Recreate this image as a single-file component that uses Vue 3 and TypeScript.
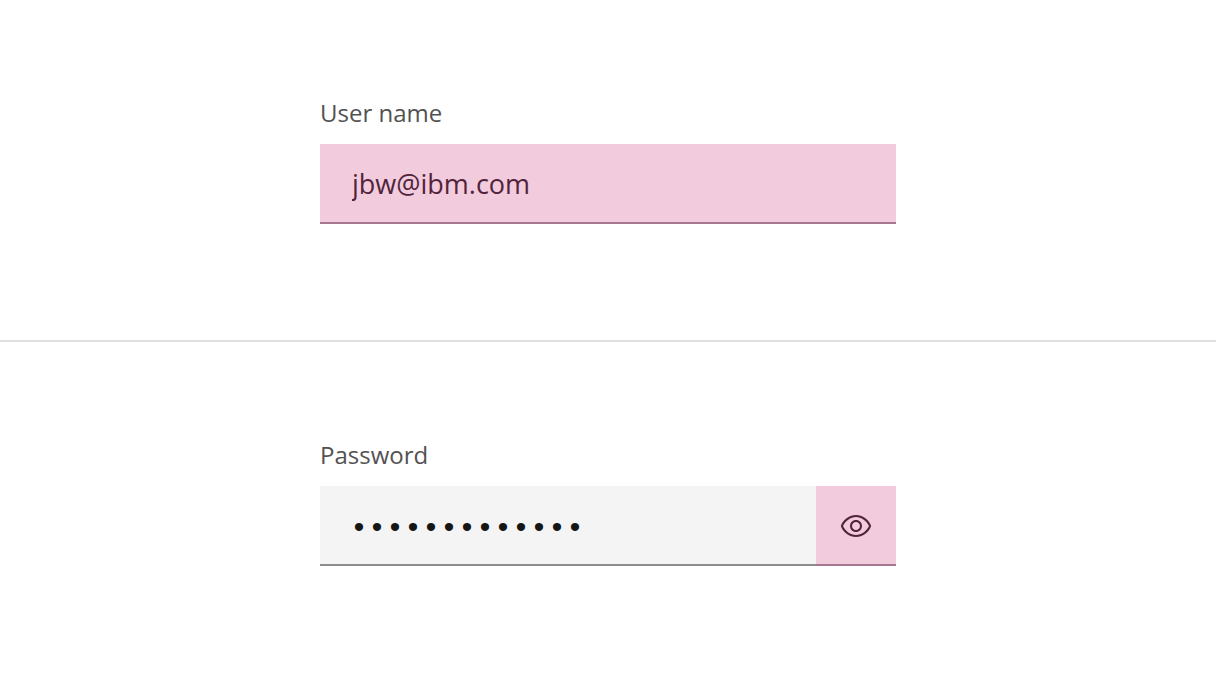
<script setup lang="ts">
import { ref } from 'vue'

const userName = ref('jbw@ibm.com')
const password = ref('carbon-design')
const revealed = ref(false)
</script>

<template>
  <main class="page">
    <section class="panel">
      <div class="field">
        <label class="label" for="user-name">User name</label>
        <div class="control">
          <input id="user-name" v-model="userName" class="input highlighted" type="text" autocomplete="off" />
        </div>
      </div>
    </section>
    <section class="panel divided">
      <div class="field">
        <label class="label" for="password">Password</label>
        <div class="control">
          <input
            id="password"
            v-model="password"
            class="input"
            :class="{ masked: !revealed }"
            :type="revealed ? 'text' : 'password'"
            autocomplete="off"
          />
          <button
            class="reveal"
            type="button"
            :aria-label="revealed ? 'Hide password' : 'Show password'"
            :aria-pressed="revealed"
            @click="revealed = !revealed"
          >
            <svg class="eye" viewBox="0 0 16 16" aria-hidden="true">
              <path d="M15.5 7.8C14.3 4.7 11.3 2.6 8 2.5C4.7 2.6 1.7 4.7.5 7.8c-.1.1-.1.2 0 .4C1.7 11.3 4.7 13.4 8 13.5c3.3-.1 6.3-2.2 7.5-5.3C15.6 8.1 15.6 7.9 15.5 7.8ZM8 12.5c-2.7 0-5.4-2-6.5-4.5c1.1-2.5 3.8-4.5 6.5-4.5s5.4 2 6.5 4.5C13.4 10.5 10.6 12.5 8 12.5Z" />
              <path d="M8 5C6.3 5 5 6.3 5 8s1.3 3 3 3s3-1.3 3-3S9.7 5 8 5ZM8 10c-1.1 0-2-.9-2-2s.9-2 2-2s2 .9 2 2S9.1 10 8 10Z" />
            </svg>
          </button>
        </div>
      </div>
    </section>
  </main>
</template>

<style>
body {
  margin: 0;
  background: #fff;
}
</style>

<style scoped>
.page {
  display: grid;
  grid-template-rows: 1fr 1fr;
  min-height: 100vh;
  font-family: "Open Sans", "Noto Sans", sans-serif;
}

.panel {
  display: flex;
  justify-content: center;
  align-items: flex-start;
  box-sizing: border-box;
  padding: 96px 32px;
}

.divided {
  border-top: 2px solid #e0e0e0;
  margin-top: -2px;
}

.field {
  display: flex;
  flex-direction: column;
  gap: 14px;
  width: 100%;
  max-width: 576px;
}

.label {
  color: #525252;
  font-size: 24px;
  line-height: 34px;
}

.control {
  display: flex;
  height: 80px;
}

.input {
  flex: 1;
  min-width: 0;
  box-sizing: border-box;
  margin: 0;
  padding: 0 32px;
  border: 0;
  border-bottom: 2px solid #8d8d8d;
  border-radius: 0;
  outline: 0;
  background: #f4f4f4;
  color: #161616;
  font-family: inherit;
  font-size: 27px;
}

.highlighted {
  border-color: #a6788f;
  background: #f2cbdc;
  color: #51243c;
}

.masked {
  padding: 8px 30px 0;
  font-family: "Liberation Mono", monospace;
  font-size: 30px;
}

.reveal {
  display: flex;
  align-items: center;
  justify-content: center;
  box-sizing: border-box;
  width: 80px;
  margin: 0;
  padding: 2px 0 0;
  border: 0;
  border-bottom: 2px solid #a6788f;
  border-radius: 0;
  background: #f2cbdc;
  cursor: pointer;
}

.eye {
  width: 32px;
  height: 32px;
  fill: #51243c;
}

.input:focus-visible,
.reveal:focus-visible {
  outline: 2px solid #0f62fe;
  outline-offset: -2px;
}
</style>
